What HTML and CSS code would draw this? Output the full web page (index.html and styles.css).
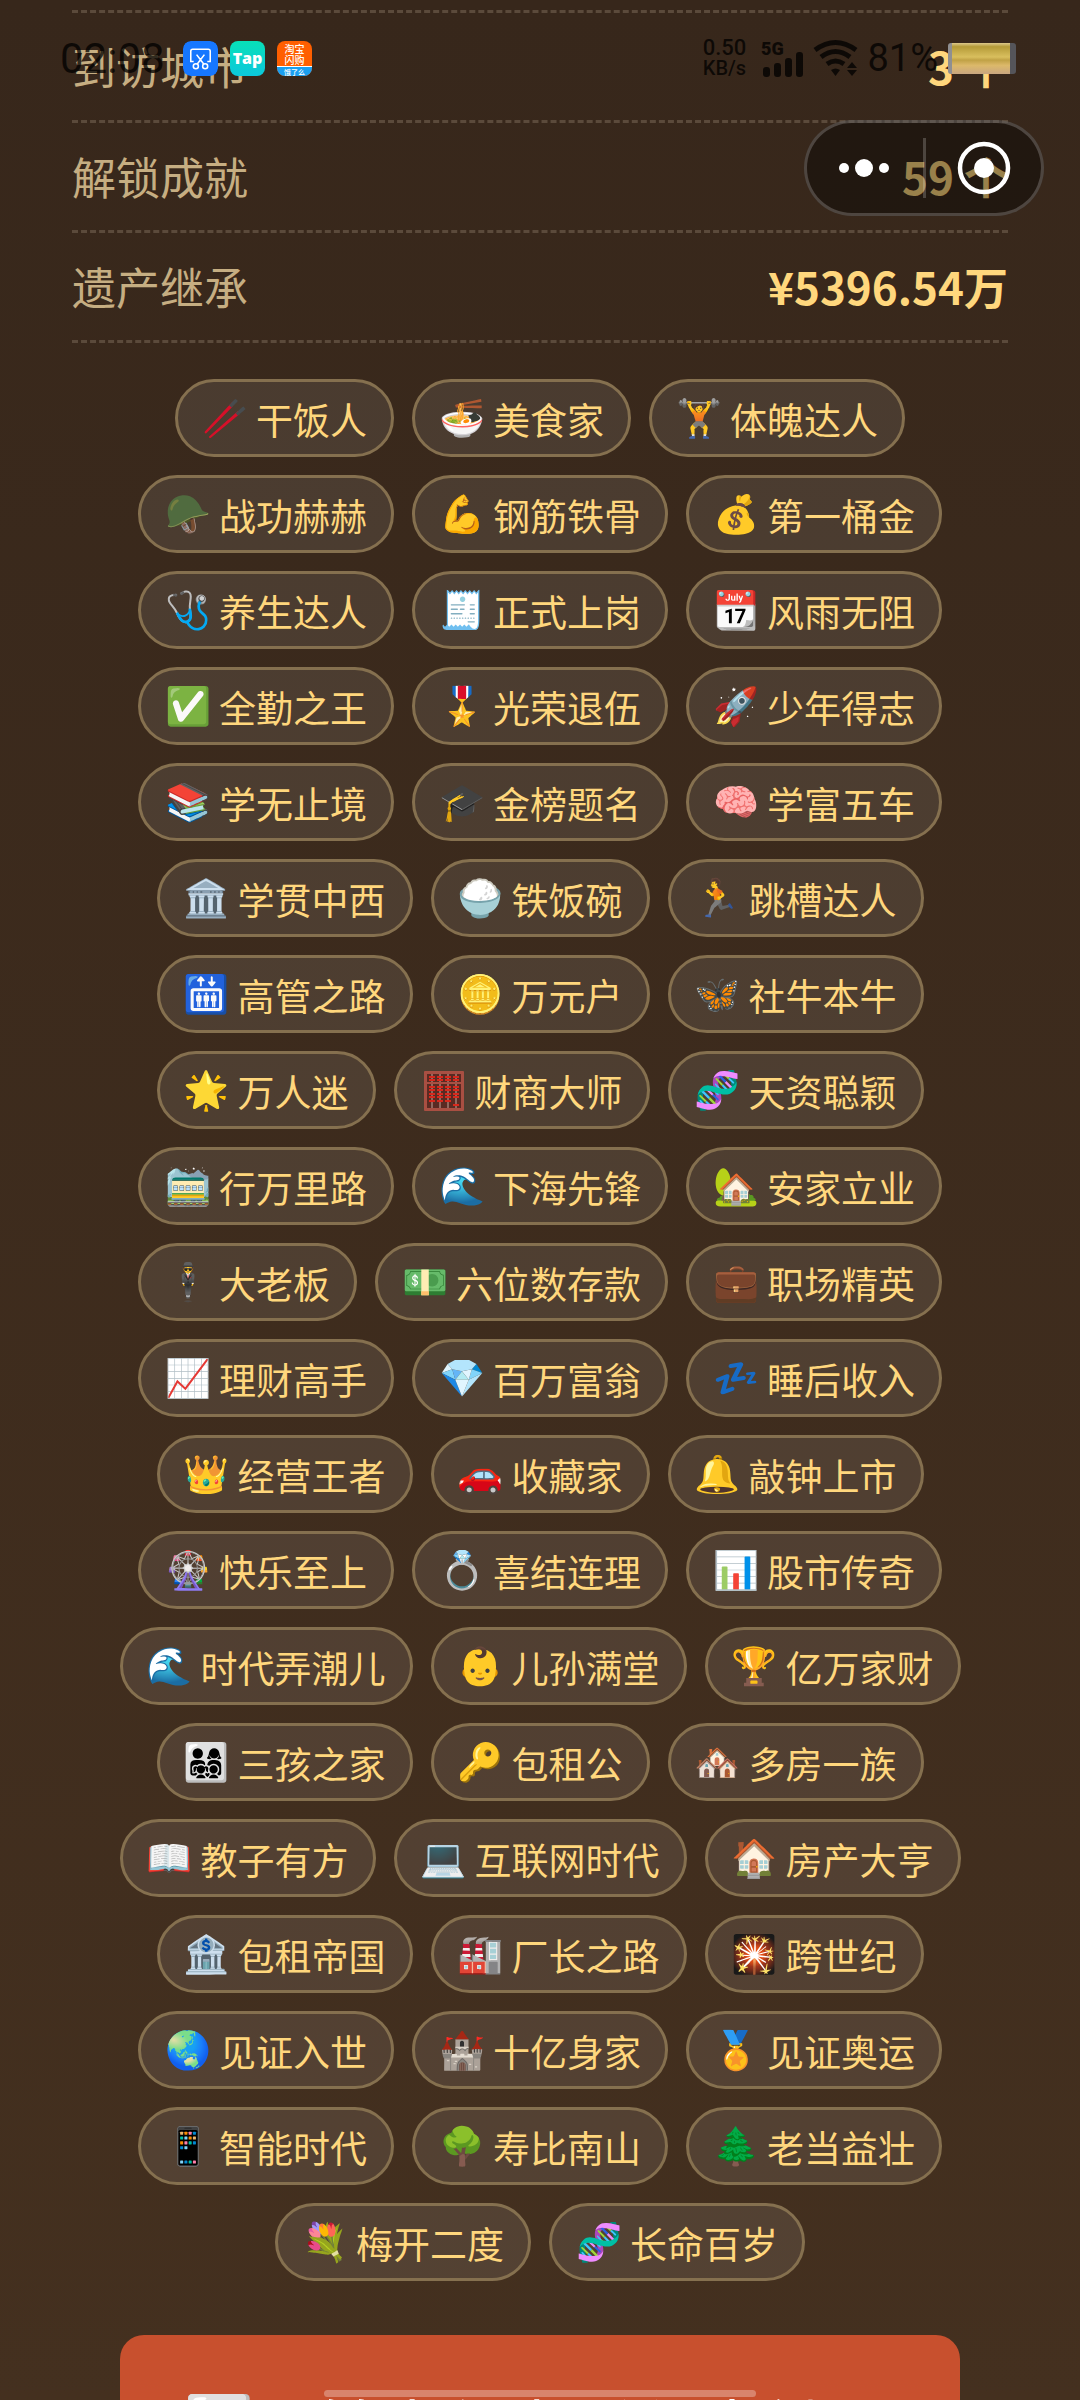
FILE: index.html
```
<!DOCTYPE html>
<html lang="zh-CN">
<head>
<meta charset="utf-8">
<meta name="viewport" content="width=device-width, initial-scale=1">
<title>人生总结</title>
<link rel="stylesheet" href="styles.css">
</head>
<body>
<div class="screen">
  <main class="summary">
    <dl class="stats">
      <div class="stat"><dt>到访城市</dt><dd>3 个</dd></div>
      <div class="stat"><dt>解锁成就</dt><dd>59 个</dd></div>
      <div class="stat"><dt>遗产继承</dt><dd>¥5396.54万</dd></div>
    </dl>
    <ul class="tags">
      <li class="tag"><span class="emoji">🥢</span>干饭人</li>
      <li class="tag"><span class="emoji">🍜</span>美食家</li>
      <li class="tag"><span class="emoji">🏋️</span>体魄达人</li>
      <li class="tag"><span class="emoji">🪖</span>战功赫赫</li>
      <li class="tag"><span class="emoji">💪</span>钢筋铁骨</li>
      <li class="tag"><span class="emoji">💰</span>第一桶金</li>
      <li class="tag"><span class="emoji">🩺</span>养生达人</li>
      <li class="tag"><span class="emoji">🧾</span>正式上岗</li>
      <li class="tag"><span class="emoji">📆</span>风雨无阻</li>
      <li class="tag"><span class="emoji">✅</span>全勤之王</li>
      <li class="tag"><span class="emoji">🎖️</span>光荣退伍</li>
      <li class="tag"><span class="emoji">🚀</span>少年得志</li>
      <li class="tag"><span class="emoji">📚</span>学无止境</li>
      <li class="tag"><span class="emoji">🎓</span>金榜题名</li>
      <li class="tag"><span class="emoji">🧠</span>学富五车</li>
      <li class="tag"><span class="emoji">🏛️</span>学贯中西</li>
      <li class="tag"><span class="emoji">🍚</span>铁饭碗</li>
      <li class="tag"><span class="emoji">🏃</span>跳槽达人</li>
      <li class="tag"><span class="emoji">🛗</span>高管之路</li>
      <li class="tag"><span class="emoji">🪙</span>万元户</li>
      <li class="tag"><span class="emoji">🦋</span>社牛本牛</li>
      <li class="tag"><span class="emoji">🌟</span>万人迷</li>
      <li class="tag"><span class="emoji"><svg class="abacus" viewBox="0 0 42 42" aria-hidden="true">
        <rect x="1" y="1" width="40" height="40" rx="1" fill="#a94f42"/>
        <rect x="4" y="4" width="34" height="34" fill="#5a2a22"/>
        <path d="M9 4v34M17 4v34M25 4v34M33 4v34" stroke="#c9a79c" stroke-width="1"/>
        <path d="M4 13h34" stroke="#a94f42" stroke-width="2"/>
        <g stroke="#d8281c" stroke-width="2" stroke-dasharray="6 2">
          <path d="M6 7h30M6 10h30M6 17h30M6 20h30M6 24h30M6 27h30M6 31h8M14 31h14M30 35h6"/>
        </g>
      </svg></span>财商大师</li>
      <li class="tag"><span class="emoji">🧬</span>天资聪颖</li>
      <li class="tag"><span class="emoji">🚞</span>行万里路</li>
      <li class="tag"><span class="emoji">🌊</span>下海先锋</li>
      <li class="tag"><span class="emoji">🏡</span>安家立业</li>
      <li class="tag"><span class="emoji">🕴️</span>大老板</li>
      <li class="tag"><span class="emoji">💵</span>六位数存款</li>
      <li class="tag"><span class="emoji">💼</span>职场精英</li>
      <li class="tag"><span class="emoji">📈</span>理财高手</li>
      <li class="tag"><span class="emoji">💎</span>百万富翁</li>
      <li class="tag"><span class="emoji">💤</span>睡后收入</li>
      <li class="tag"><span class="emoji">👑</span>经营王者</li>
      <li class="tag"><span class="emoji">🚗</span>收藏家</li>
      <li class="tag"><span class="emoji">🔔</span>敲钟上市</li>
      <li class="tag"><span class="emoji">🎡</span>快乐至上</li>
      <li class="tag"><span class="emoji">💍</span>喜结连理</li>
      <li class="tag"><span class="emoji">📊</span>股市传奇</li>
      <li class="tag"><span class="emoji">🌊</span>时代弄潮儿</li>
      <li class="tag"><span class="emoji">👶</span>儿孙满堂</li>
      <li class="tag"><span class="emoji">🏆</span>亿万家财</li>
      <li class="tag"><span class="emoji">👨‍👩‍👧‍👦</span>三孩之家</li>
      <li class="tag"><span class="emoji">🔑</span>包租公</li>
      <li class="tag"><span class="emoji">🏘️</span>多房一族</li>
      <li class="tag"><span class="emoji">📖</span>教子有方</li>
      <li class="tag"><span class="emoji">💻</span>互联网时代</li>
      <li class="tag"><span class="emoji">🏠</span>房产大亨</li>
      <li class="tag"><span class="emoji">🏦</span>包租帝国</li>
      <li class="tag"><span class="emoji">🏭</span>厂长之路</li>
      <li class="tag"><span class="emoji">🎇</span>跨世纪</li>
      <li class="tag"><span class="emoji">🌏</span>见证入世</li>
      <li class="tag"><span class="emoji">🏰</span>十亿身家</li>
      <li class="tag"><span class="emoji">🏅</span>见证奥运</li>
      <li class="tag"><span class="emoji">📱</span>智能时代</li>
      <li class="tag"><span class="emoji">🌳</span>寿比南山</li>
      <li class="tag"><span class="emoji">🌲</span>老当益壮</li>
      <li class="tag"><span class="emoji">💐</span>梅开二度</li>
      <li class="tag"><span class="emoji">🧬</span>长命百岁</li>
    </ul>
    <button class="restart" type="button"><span class="restart-emoji">👨‍👩‍👧‍👦</span><span>转生作为后代来继承</span></button>
  </main>

  <header class="statusbar">
    <div class="status-left">
      <time class="clock">02:08</time>
      <svg class="app-icon" viewBox="0 0 36 36" aria-hidden="true">
        <rect width="36" height="36" rx="8" fill="#1677ff"/>
        <path d="M11 21H8V10.500q0-2 2-2h16q2 0 2 2V21h-3M14 14l7.500 10M22 14l-7.500 10" fill="none" stroke="#fff" stroke-width="1.600"/>
        <circle cx="13.200" cy="26" r="2.600" fill="none" stroke="#fff" stroke-width="1.600"/>
        <circle cx="22.800" cy="26" r="2.600" fill="none" stroke="#fff" stroke-width="1.600"/>
      </svg>
      <span class="app-icon app-tap">Tap</span>
      <span class="app-icon app-shop"><span class="shop-name">淘宝<br>闪购</span><span class="shop-sub">饿了么</span></span>
    </div>
    <div class="status-right">
      <div class="speed"><span>0.50</span><span class="speed-unit">KB/s</span></div>
      <svg class="signal" viewBox="0 0 44 38" role="img" aria-label="5G">
        <text x="0" y="16" class="signal-label">5G</text>
        <g fill="currentColor"><rect x="2" y="28" width="7" height="10" rx="3"/><rect x="13" y="24" width="7" height="14" rx="3"/><rect x="24" y="19" width="7" height="19" rx="3"/><rect x="35" y="13" width="7" height="25" rx="3"/></g>
      </svg>
      <svg class="wifi" viewBox="0 0 46 38" aria-hidden="true">
        <g fill="none" stroke="currentColor" stroke-width="5"><path d="M2 11Q22.500-4 43 11"/><path d="M8 18Q22.500 7 37 18"/><path d="M14 25Q22.500 19 31 25"/></g>
        <path d="M18 31q4.500-3 9 0l-4.500 6zM34 29l5-6 5 6zM34 31l5 6 5-6z" fill="currentColor"/>
      </svg>
      <span class="percent">81%</span>
      <span class="battery"></span>
    </div>
  </header>

  <div class="capsule">
    <button class="capsule-button" type="button" aria-label="更多">
      <svg viewBox="0 0 60 60"><g fill="#fff"><circle cx="10" cy="30" r="5"/><circle cx="30" cy="30" r="9"/><circle cx="50" cy="30" r="5"/></g></svg>
    </button>
    <span class="capsule-divider"></span>
    <button class="capsule-button" type="button" aria-label="关闭">
      <svg viewBox="0 0 60 60"><circle cx="30" cy="30" r="24" fill="none" stroke="#fff" stroke-width="4.500"/><circle cx="30" cy="30" r="10" fill="#fff"/></svg>
    </button>
  </div>
  <div class="home-indicator"></div>
</div>
</body>
</html>
```

FILE: styles.css
```
* {
  box-sizing: border-box;
}

body {
  margin: 0;
  font-family: "Noto Sans CJK SC", "Noto Color Emoji", sans-serif;
}

.screen {
  position: relative;
  height: 100vh;
  overflow: hidden;
  background: linear-gradient(#37271b, #44301f);
}

.stats {
  margin: 0;
  padding: 10px 72px 0;
}

.stat {
  display: flex;
  align-items: center;
  justify-content: space-between;
  height: 110px;
  padding-bottom: 2px;
  border-bottom: 3px dashed #5b4a3b;
  font-size: 44px;
}

.stat:first-child {
  height: 113px;
  border-top: 3px dashed #5b4a3b;
}

.stat dt {
  color: #c6ae82;
}

.stat dd {
  margin: 0;
  color: #ffd77d;
  font-weight: 700;
}

.tags {
  display: flex;
  flex-wrap: wrap;
  justify-content: center;
  gap: 18px;
  margin: 36px 0 54px;
  padding: 0 118px;
  list-style: none;
}

.tag {
  display: flex;
  align-items: center;
  gap: 8px;
  height: 78px;
  padding: 1px 24px 0;
  border: 3px solid #85704f;
  border-radius: 39px;
  background: rgba(255, 255, 255, 0.09);
  color: #ffd77d;
  font-size: 37px;
  line-height: 44px;
}

.emoji {
  display: flex;
  justify-content: center;
  width: 46px;
  font-family: "Noto Color Emoji", sans-serif;
}

.abacus {
  width: 42px;
  height: 42px;
}

.restart {
  display: flex;
  align-items: center;
  justify-content: space-between;
  width: calc(100% - 240px);
  height: 180px;
  margin: 0 auto;
  padding: 0 68px 0 64px;
  border: 0;
  border-radius: 24px;
  background: #c8502e;
  color: #fff;
  font-family: inherit;
  font-size: 64px;
  line-height: 72px;
  white-space: nowrap;
}

.restart-emoji {
  font-family: "Noto Color Emoji", sans-serif;
  font-size: 56px;
}

.statusbar {
  position: absolute;
  top: 38px;
  left: 0;
  right: 0;
  display: flex;
  justify-content: space-between;
  padding: 0 64px 0 60px;
  color: rgba(0, 0, 0, 0.75);
  font-family: Roboto, sans-serif;
}

.status-left,
.status-right {
  display: flex;
  align-items: center;
  height: 40px;
}

.status-left {
  gap: 12px;
}

.clock {
  width: 111px;
  font-size: 42px;
}

.app-icon {
  width: 35px;
  height: 35px;
  border-radius: 8px;
  overflow: hidden;
}

.app-tap {
  background: linear-gradient(#08e0b8, #0cc8dc);
  color: #fff;
  font-family: "Open Sans", sans-serif;
  font-size: 16px;
  font-weight: 800;
  line-height: 34px;
  text-align: center;
}

.app-shop {
  background: #ff5f00;
  color: #fff;
  font-family: "Noto Sans CJK SC", sans-serif;
  font-weight: 500;
  text-align: center;
}

.shop-name,
.shop-sub {
  display: block;
}

.shop-name {
  height: 25px;
  padding-top: 2px;
  font-size: 10px;
  line-height: 11px;
}

.shop-sub {
  background: #1a9ff0;
  border-top: 1px solid #fff;
  font-size: 7px;
  line-height: 10px;
}

.speed {
  display: flex;
  flex-direction: column;
  align-items: center;
  width: 46px;
  margin-right: 14px;
  font-size: 22px;
  font-weight: 500;
  line-height: 20px;
}

.speed-unit {
  font-size: 20px;
}

.signal {
  width: 44px;
  height: 38px;
  margin-right: 8px;
}

.signal-label {
  fill: currentColor;
  font-size: 18px;
  font-weight: 900;
}

.wifi {
  width: 46px;
  height: 38px;
  margin-right: 8px;
}

.percent {
  margin-right: 10px;
  font-size: 38px;
}

.battery {
  width: 68px;
  height: 31px;
  border-left: 4px solid #8f8f91;
  border-right: 6px solid #55555a;
  border-radius: 3px;
  background: linear-gradient(#ddc98c, #b49a38 12%, #d9bf5e 45%, #c0a145 55%, #dcb96a 72%, #c9a680);
}

.capsule {
  position: absolute;
  top: 120px;
  right: 36px;
  display: flex;
  align-items: center;
  justify-content: space-between;
  width: 240px;
  height: 96px;
  padding: 0 27px;
  border: 3px solid rgba(255, 255, 255, 0.2);
  border-radius: 48px;
  background: rgba(0, 0, 0, 0.4);
}

.capsule-button {
  width: 60px;
  height: 60px;
  padding: 0;
  border: 0;
  background: none;
}

.capsule-button svg {
  display: block;
}

.capsule-divider {
  width: 3px;
  height: 60px;
  background: rgba(255, 255, 255, 0.2);
}

.home-indicator {
  position: absolute;
  bottom: 3px;
  left: 30%;
  right: 30%;
  height: 7px;
  border-radius: 4px;
  background: rgba(255, 255, 255, 0.3);
}
```
